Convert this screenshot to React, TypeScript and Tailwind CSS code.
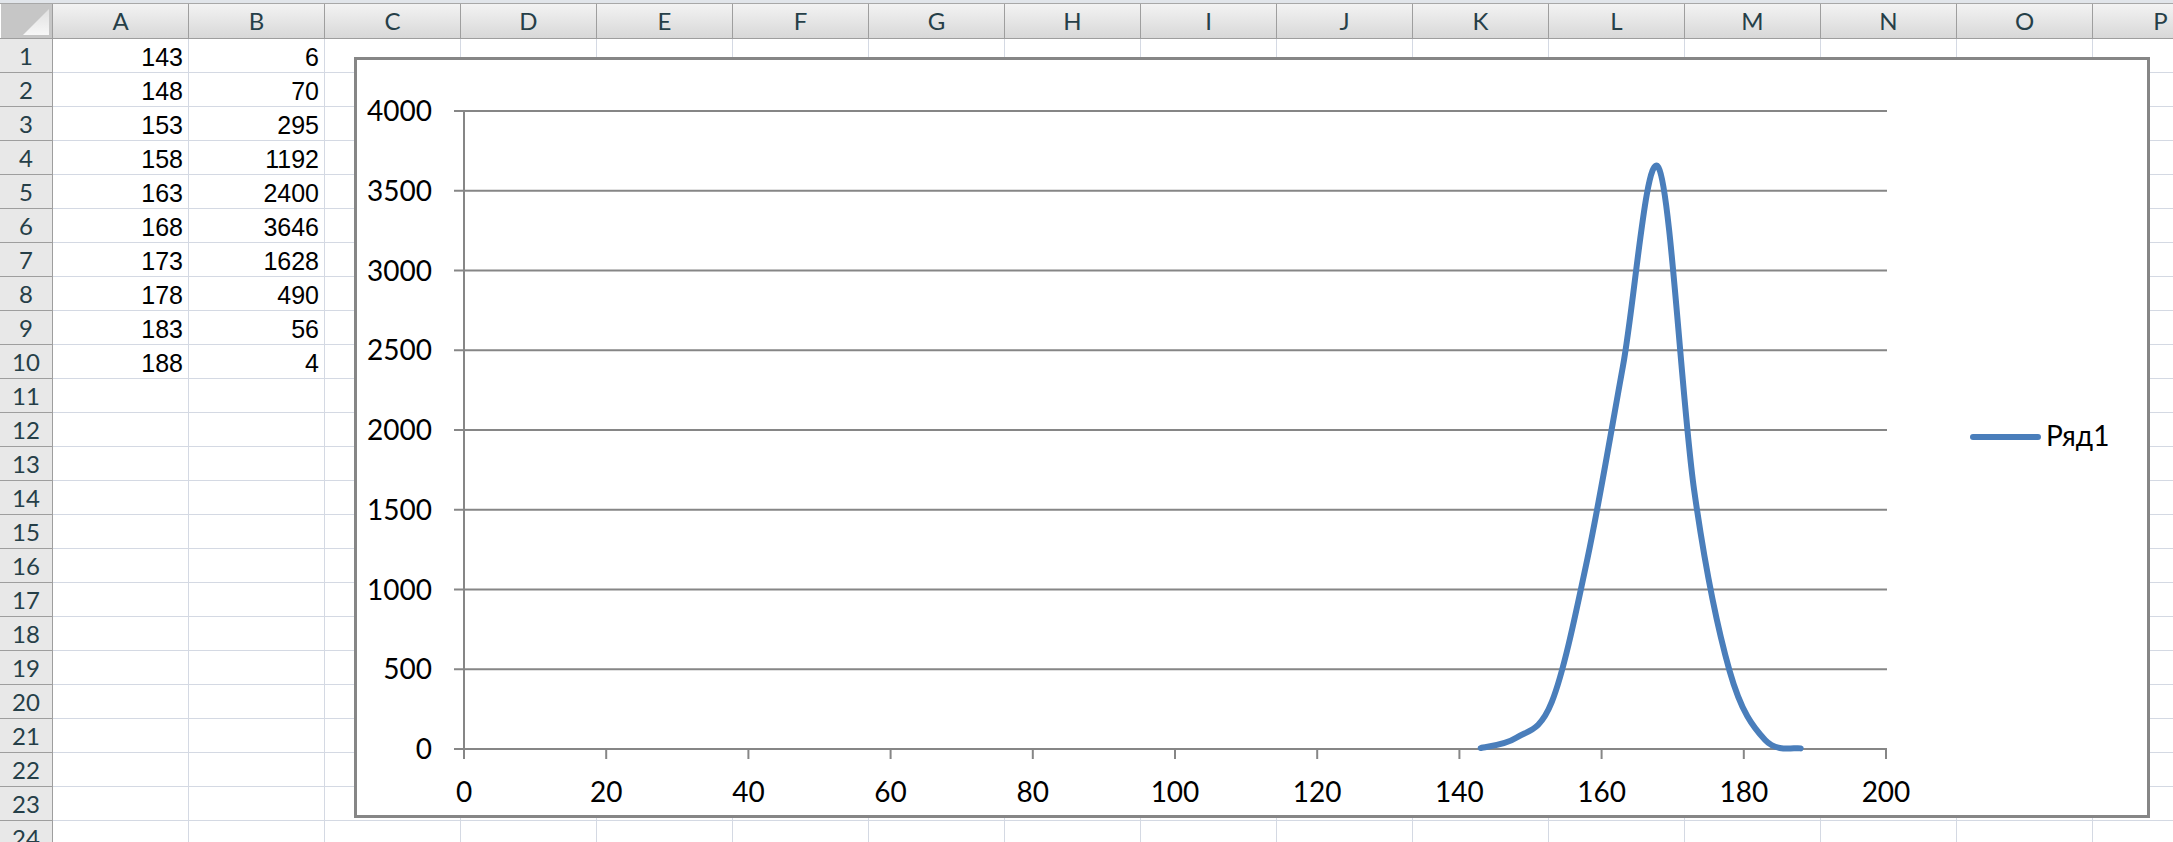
import React from 'react';

const columns = ['A', 'B', 'C', 'D', 'E', 'F', 'G', 'H', 'I', 'J', 'K', 'L', 'M', 'N', 'O', 'P'];

const data: [number, number][] = [
  [143, 6],
  [148, 70],
  [153, 295],
  [158, 1192],
  [163, 2400],
  [168, 3646],
  [173, 1628],
  [178, 490],
  [183, 56],
  [188, 4],
];

const rowCount = 24;

// chart geometry, in page pixels
const x0 = 464;
const xPer = 7.11;
const y0 = 749;
const yPer = 79.75 / 500;
const px = (v: number) => x0 + v * xPer;
const py = (v: number) => y0 - v * yPer;

// smoothed line like Excel's (catmull-rom -> bezier)
const buildPath = () => {
  const pts = data.map(([a, b]) => [px(a), py(b)]);
  let d = `M ${pts[0][0]} ${pts[0][1]}`;
  for (let i = 0; i < pts.length - 1; i++) {
    const p0 = pts[i - 1] || pts[i];
    const p1 = pts[i];
    const p2 = pts[i + 1];
    const p3 = pts[i + 2] || p2;
    const c1x = p1[0] + (p2[0] - p0[0]) / 6;
    const c1y = p1[1] + (p2[1] - p0[1]) / 6;
    const c2x = p2[0] - (p3[0] - p1[0]) / 6;
    const c2y = p2[1] - (p3[1] - p1[1]) / 6;
    d += ` C ${c1x} ${c1y} ${c2x} ${c2y} ${p2[0]} ${p2[1]}`;
  }
  return d;
};

const Chart: React.FC = () => {
  const yTicks = [0, 500, 1000, 1500, 2000, 2500, 3000, 3500, 4000];
  const xTicks = [0, 20, 40, 60, 80, 100, 120, 140, 160, 180, 200];
  return (
    <div className="absolute left-[354px] top-[57px] w-[1796px] h-[761px] border-[3px] border-[#868686] bg-white">
      <svg width={1790} height={755} viewBox="357 60 1790 755" className="block font-['Lato','Open_Sans',sans-serif]">
        {yTicks.map((v) => (
          <g key={v}>
            <line x1={454} x2={px(200) + 1} y1={py(v)} y2={py(v)} stroke="#868686" strokeWidth={2} />
            <text x={432} y={py(v) + 10} textAnchor="end" fontSize={28} fill="#000">
              {v}
            </text>
          </g>
        ))}
        <line x1={x0} x2={x0} y1={py(4000)} y2={759} stroke="#868686" strokeWidth={2} />
        {xTicks.map((v) => (
          <g key={v}>
            <line x1={px(v)} x2={px(v)} y1={y0} y2={759} stroke="#868686" strokeWidth={2} />
            <text x={px(v)} y={802} textAnchor="middle" fontSize={28} fill="#000">
              {v}
            </text>
          </g>
        ))}
        <path d={buildPath()} fill="none" stroke="#4a7ebb" strokeWidth={6} strokeLinecap="round" strokeLinejoin="round" />
        <line x1={1973} x2={2038} y1={437} y2={437} stroke="#4a7ebb" strokeWidth={6} strokeLinecap="round" />
        <text x={2046} y={446} fontSize={28} fill="#000">Ряд1</text>
      </svg>
    </div>
  );
};

const App: React.FC = () => {
  return (
    <div className="relative w-[2173px] h-[842px] overflow-hidden bg-white font-['Liberation_Sans',Arial,sans-serif]">
      {/* top strip */}
      <div className="h-[4px] bg-[#e1e5ea] border-b border-[#a8a8a8]" />

      {/* column headers */}
      <div className="flex h-[35px] border-b border-[#9e9e9e] bg-gradient-to-b from-[#f3f3f3] to-[#d8d8d8] font-['Lato',sans-serif] text-[24px] text-[#263f48]">
        <div className="relative w-[53px] shrink-0 border-r border-[#9e9e9e] bg-[#c6c6c6] border-l border-l-white">
          <svg width={52} height={34} className="absolute inset-0">
            <defs>
              <linearGradient id="corner" x1="0" y1="0" x2="0" y2="1">
                <stop offset="0" stopColor="#e0e0e0" />
                <stop offset="1" stopColor="#f7f7f7" />
              </linearGradient>
            </defs>
            <polygon points="48,5 48,31 22,31" fill="url(#corner)" />
          </svg>
        </div>
        {columns.map((c) => (
          <div key={c} className="w-[136px] shrink-0 border-r border-[#9e9e9e] flex items-center justify-center leading-none">
            {c}
          </div>
        ))}
      </div>

      {/* rows */}
      {Array.from({ length: rowCount }, (_, i) => {
        const row = data[i];
        return (
          <div key={i} className="flex h-[34px]">
            <div className="w-[53px] shrink-0 border-r border-b border-[#9e9e9e] bg-[#e8e8e8] flex items-center justify-center font-['Lato',sans-serif] text-[24px] text-[#263f48] leading-none pt-[1px]">
              {i + 1}
            </div>
            {columns.map((c, j) => (
              <div
                key={c}
                className="w-[136px] shrink-0 border-r border-b border-[#d4d9e3] text-right pr-[5px] pt-[3px] text-[25px] leading-[30px] text-black"
              >
                {row && j < 2 ? row[j] : ''}
              </div>
            ))}
          </div>
        );
      })}

      <Chart />
    </div>
  );
};

export default App;
